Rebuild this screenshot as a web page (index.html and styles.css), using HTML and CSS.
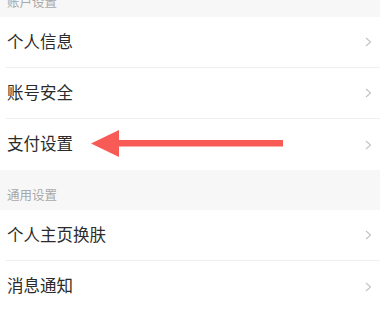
FILE: index.html
```html
<!DOCTYPE html>
<html lang="zh-CN">
<head>
<meta charset="utf-8">
<link rel="stylesheet" href="styles.css">
</head>
<body>
<div class="page">
  <div class="section-title first">账户设置</div>
  <div class="group">
    <div class="row"><span class="label">个人信息</span><span class="chev"><svg width="7" height="10" viewBox="0 0 7 10"><path d="M1 1 L5.5 5 L1 9" fill="none" stroke="#c2c2c2" stroke-width="1.1"/></svg></span></div>
    <div class="row"><span class="label">账号安全</span><span class="chev"><svg width="7" height="10" viewBox="0 0 7 10"><path d="M1 1 L5.5 5 L1 9" fill="none" stroke="#c2c2c2" stroke-width="1.1"/></svg></span></div>
    <div class="row last"><span class="label">支付设置</span><span class="chev"><svg width="7" height="10" viewBox="0 0 7 10"><path d="M1 1 L5.5 5 L1 9" fill="none" stroke="#c2c2c2" stroke-width="1.1"/></svg></span></div>
  </div>
  <div class="section-title">通用设置</div>
  <div class="group">
    <div class="row"><span class="label">个人主页换肤</span><span class="chev"><svg width="7" height="10" viewBox="0 0 7 10"><path d="M1 1 L5.5 5 L1 9" fill="none" stroke="#c2c2c2" stroke-width="1.1"/></svg></span></div>
    <div class="row last"><span class="label">消息通知</span><span class="chev"><svg width="7" height="10" viewBox="0 0 7 10"><path d="M1 1 L5.5 5 L1 9" fill="none" stroke="#c2c2c2" stroke-width="1.1"/></svg></span></div>
  </div>
  <svg class="arrow" width="200" height="30" viewBox="0 0 200 30">
    <polygon points="0,13.5 28,0 28,27" fill="#f85a56"/>
    <rect x="27" y="10" width="165" height="6.5" fill="#f85a56"/>
  </svg>
</div>
</body>
</html>
```
FILE: styles.css
```css
html, body {
  margin: 0;
  padding: 0;
  background: #ffffff;
}
body {
  font-family: "Noto Sans CJK SC", "Noto Sans", sans-serif;
  overflow: hidden;
}
.page {
  position: relative;
  width: 380px;
  height: 309px;
  overflow: hidden;
}
.section-title {
  background: #f7f7f7;
  color: #a8a8a8;
  font-size: 12.5px;
  line-height: 14px;
  height: 14px;
  padding: 18px 0 8px 7px;
}
.section-title.first {
  margin-top: -23px;
}
.group {
  background: #ffffff;
}
.row {
  display: flex;
  align-items: center;
  justify-content: space-between;
  height: 50px;
  margin-left: 6px;
  padding-left: 1px;
  padding-right: 8px;
  border-bottom: 1px solid #efefef;
}
.row.last {
  border-bottom: none;
  height: 51px;
}
.label {
  font-size: 16.5px;
  line-height: 20px;
  padding-bottom: 3px;
  color: #2b2b2b;
}
.chev {
  display: flex;
  align-items: center;
}
.arrow {
  position: absolute;
  left: 91px;
  top: 130px;
}
```
